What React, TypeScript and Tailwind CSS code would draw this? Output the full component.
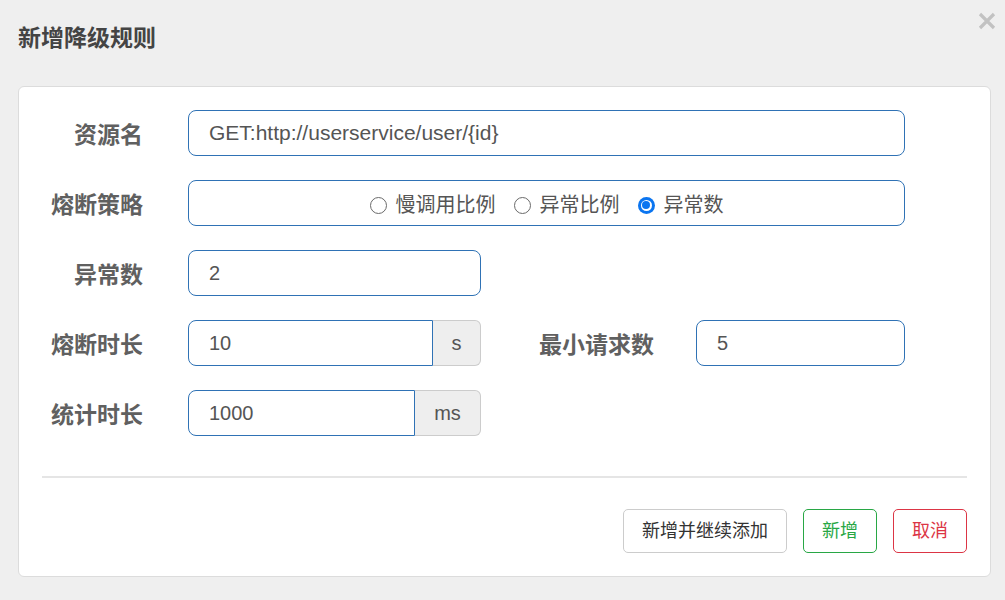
const FONT = "font-['Liberation_Sans','Noto_Sans_CJK_SC',sans-serif]"

function Radio({ label, checked }: { label: string; checked?: boolean }) {
  return (
    <label className="flex items-center gap-[9px]">
      {checked ? (
        <span className="shrink-0 w-[17px] h-[17px] rounded-full bg-[#0b75f0] flex items-center justify-center">
          <span className="shrink-0 w-[11px] h-[11px] rounded-full bg-white flex items-center justify-center">
            <span className="shrink-0 w-[8px] h-[8px] rounded-full bg-[#0b75f0]" />
          </span>
        </span>
      ) : (
        <span className="shrink-0 w-[17px] h-[17px] rounded-full border-[1.5px] border-[#6a6a6a] bg-white" />
      )}
      <span>{label}</span>
    </label>
  )
}

function Label({ text, className = "w-[124px]" }: { text: string; className?: string }) {
  return (
    <div className={`${className} shrink-0 pt-[4px] text-right text-[23px] font-bold text-[#606060]`}>{text}</div>
  )
}

const inputCls =
  "h-[46px] border border-[#2f72b5] rounded-[8px] px-[20px] flex items-center text-[20px] text-[#555] bg-white"

export default function App() {
  return (
    <div className={`${FONT} w-[1005px] h-[600px] bg-[#efefef] relative overflow-hidden`}>
      <div className="h-[86px] flex items-center pl-[18px] pb-[10px]">
        <h2 className="text-[23px] font-bold text-[#444]">新增降级规则</h2>
      </div>
      <button className="absolute top-[11px] right-[8px] text-[#c2c2c2]">
        <svg width="20" height="20" viewBox="0 0 20 20">
          <path d="M3 3L17 17M17 3L3 17" stroke="currentColor" strokeWidth="3.2" />
        </svg>
      </button>

      <div className="mx-[18px] w-[973px] h-[491px] bg-white border border-[#dcdcdc] rounded-[6px]">
        <div className="pt-[23px] flex flex-col gap-[24px]">
          <div className="flex items-center">
            <Label text="资源名" />
            <div className={`${inputCls} ml-[45px] w-[717px] text-[21px]`}>GET:http://userservice/user/{"{id}"}</div>
          </div>

          <div className="flex items-center">
            <Label text="熔断策略" />
            <div className={`${inputCls} ml-[45px] w-[717px] justify-center gap-[18px] text-[20.5px] pt-[4px]`}>
              <Radio label="慢调用比例" />
              <Radio label="异常比例" />
              <Radio label="异常数" checked />
            </div>
          </div>

          <div className="flex items-center">
            <Label text="异常数" />
            <div className={`${inputCls} ml-[45px] w-[293px]`}>2</div>
          </div>

          <div className="flex items-center">
            <Label text="熔断时长" />
            <div className="ml-[45px] w-[293px] h-[46px] flex">
              <div className={`${inputCls} flex-1 rounded-r-none`}>10</div>
              <div className="w-[48px] h-[46px] bg-[#eeeeee] border border-l-0 border-[#cccccc] rounded-r-[6px] flex items-center justify-center text-[20px] text-[#555]">
                s
              </div>
            </div>
            <Label text="最小请求数" className="w-[173px]" />
            <div className={`${inputCls} ml-[42px] w-[209px]`}>5</div>
          </div>

          <div className="flex items-center">
            <Label text="统计时长" />
            <div className="ml-[45px] w-[293px] h-[46px] flex">
              <div className={`${inputCls} flex-1 rounded-r-none`}>1000</div>
              <div className="w-[66px] h-[46px] bg-[#eeeeee] border border-l-0 border-[#cccccc] rounded-r-[6px] flex items-center justify-center text-[20px] text-[#555]">
                ms
              </div>
            </div>
          </div>
        </div>

        <div className="mx-[23px] mt-[40px] h-[2px] bg-[#e5e5e5]" />

        <div className="flex justify-end gap-[16px] px-[23px] pt-[31px]">
          <button className="h-[44px] w-[164px] border border-[#cccccc] rounded-[5px] text-[18px] text-[#333] bg-white">
            新增并继续添加
          </button>
          <button className="h-[44px] w-[74px] border border-[#28a745] rounded-[5px] text-[18px] text-[#28a745] bg-white">
            新增
          </button>
          <button className="h-[44px] w-[74px] border border-[#dc3545] rounded-[5px] text-[18px] text-[#dc3545] bg-white">
            取消
          </button>
        </div>
      </div>
    </div>
  )
}
